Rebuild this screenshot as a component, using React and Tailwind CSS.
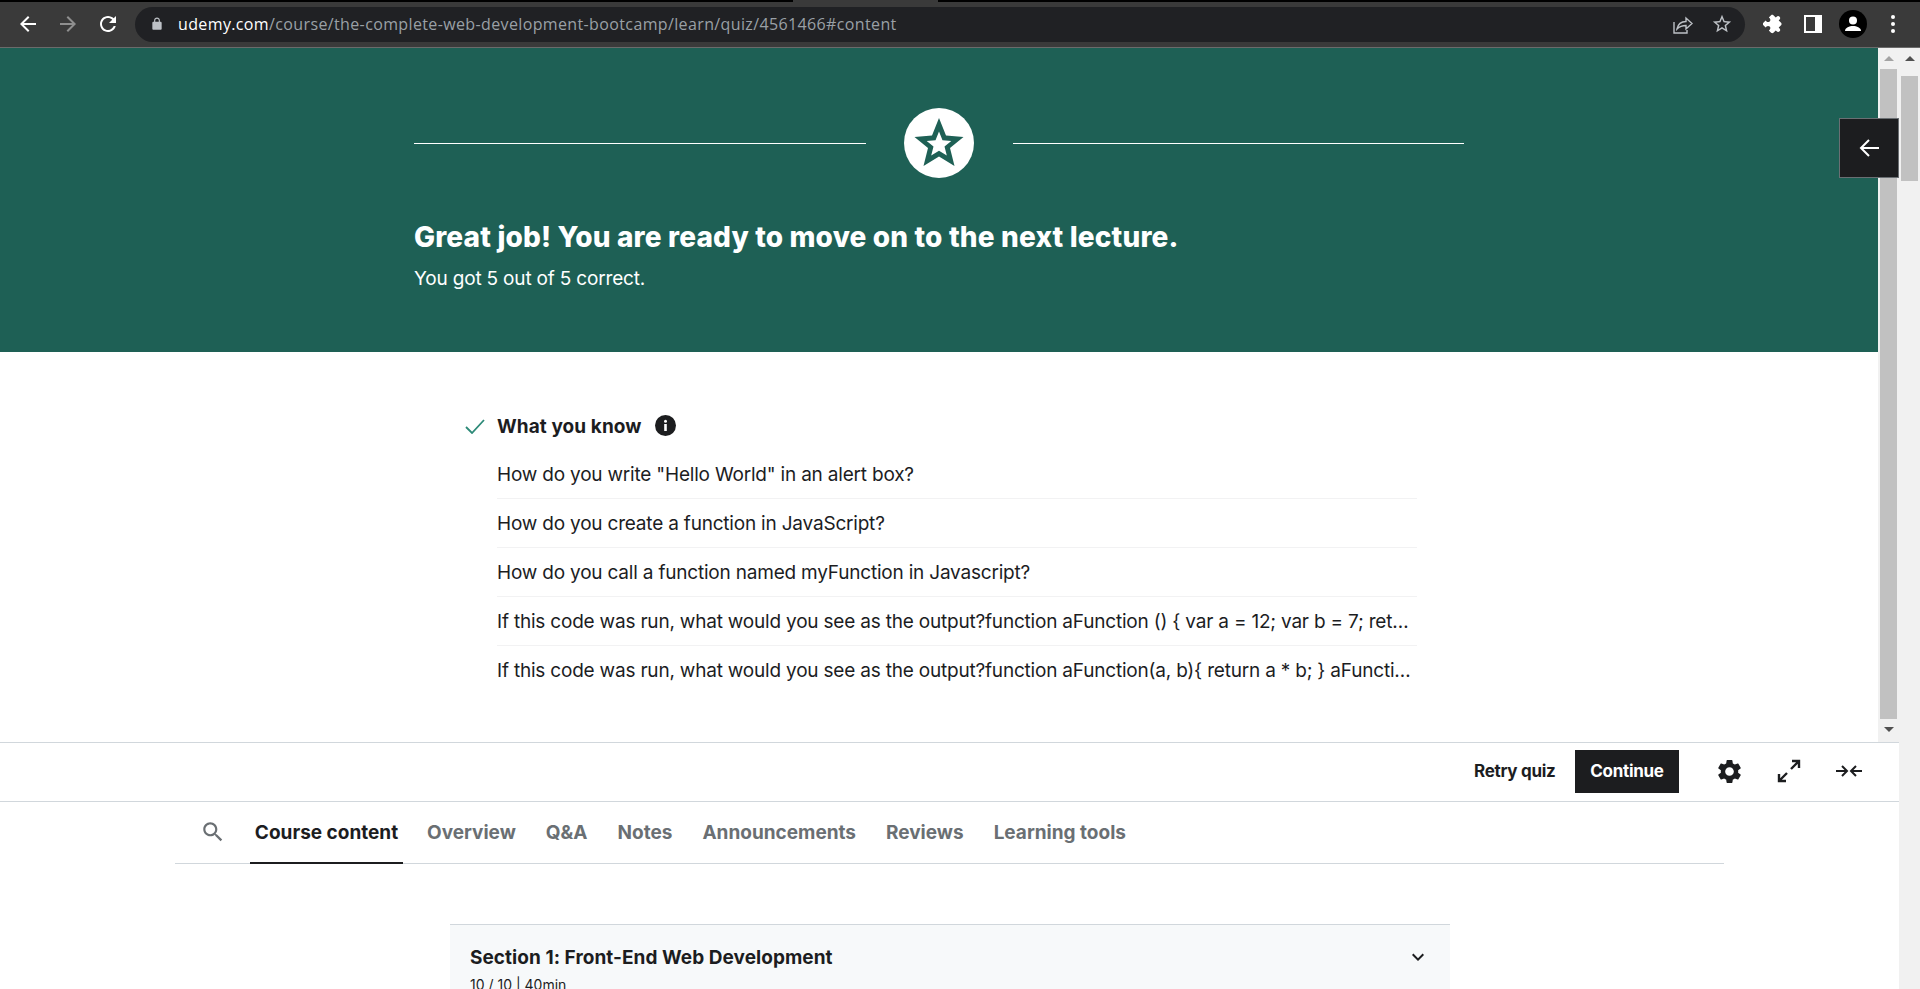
const F = "font-['Inter',sans-serif]";

function Mat({ d, className, fill = "currentColor" }) {
  return (
    <svg viewBox="0 0 24 24" className={className} fill={fill}>
      <path d={d} />
    </svg>
  );
}

const back = "M20 11H7.83l5.59-5.59L12 4l-8 8 8 8 1.41-1.41L7.83 13H20v-2z";
const forward = "M4 11h12.17l-5.59-5.59L12 4l8 8-8 8-1.41-1.41L16.17 13H4v-2z";
const refresh = "M17.65 6.35C16.2 4.9 14.21 4 12 4c-4.42 0-7.99 3.58-7.99 8s3.57 8 7.99 8c3.73 0 6.84-2.55 7.73-6h-2.08c-.82 2.33-3.04 4-5.65 4-3.31 0-6-2.69-6-6s2.69-6 6-6c1.66 0 3.14.69 4.22 1.78L13 11h7V4l-2.35 2.35z";
const lock = "M18 8h-1V6c0-2.76-2.24-5-5-5S7 3.24 7 6v2H6c-1.1 0-2 .9-2 2v10c0 1.1.9 2 2 2h12c1.1 0 2-.9 2-2V10c0-1.1-.9-2-2-2zM9 6c0-1.66 1.34-3 3-3s3 1.34 3 3v2H9V6z";
const starOutline = "M22 9.24l-7.19-.62L12 2 9.19 8.63 2 9.24l5.46 4.73L5.82 21 12 17.27 18.18 21l-1.63-7.03L22 9.24zM12 15.4l-3.76 2.27 1-4.28-3.32-2.88 4.38-.38L12 6.1l1.71 4.04 4.38.38-3.32 2.88 1 4.28L12 15.4z";
const puzzle = "M20.5 11H19V7c0-1.1-.9-2-2-2h-4V3.5C13 2.12 11.88 1 10.5 1S8 2.12 8 3.5V5H4c-1.1 0-1.99.9-1.99 2v3.8H3.5c1.49 0 2.7 1.21 2.7 2.7s-1.21 2.7-2.7 2.7H2V20c0 1.1.9 2 2 2h3.8v-1.5c0-1.49 1.21-2.7 2.7-2.7 1.49 0 2.7 1.21 2.7 2.7V22H17c1.1 0 2-.9 2-2v-4h1.5c1.38 0 2.5-1.12 2.5-2.5S21.88 11 20.5 11z";
const gear = "M19.14 12.94c.04-.3.06-.61.06-.94 0-.32-.02-.64-.07-.94l2.03-1.58c.18-.14.23-.41.12-.61l-1.92-3.32c-.12-.22-.37-.29-.59-.22l-2.39.96c-.5-.38-1.03-.7-1.62-.94l-.36-2.54c-.04-.24-.24-.41-.48-.41h-3.84c-.24 0-.43.17-.47.41l-.36 2.54c-.59.24-1.13.57-1.62.94l-2.39-.96c-.22-.08-.47 0-.59.22L2.74 8.87c-.12.21-.08.47.12.61l2.03 1.58c-.05.3-.09.63-.09.94s.02.64.07.94l-2.03 1.58c-.18.14-.23.41-.12.61l1.92 3.32c.12.22.37.29.59.22l2.39-.96c.5.38 1.03.7 1.62.94l.36 2.54c.05.24.24.41.48.41h3.84c.24 0 .44-.17.47-.41l.36-2.54c.59-.24 1.13-.56 1.62-.94l2.39.96c.22.08.47 0 .59-.22l1.92-3.32c.12-.22.07-.47-.12-.61l-2.01-1.58zM12 15.6c-1.98 0-3.6-1.62-3.6-3.6s1.62-3.6 3.6-3.6 3.6 1.62 3.6 3.6-1.62 3.6-3.6 3.6z";
const search = "M15.5 14h-.79l-.28-.27C15.41 12.59 16 11.11 16 9.5 16 5.91 13.09 3 9.5 3S3 5.91 3 9.5 5.91 16 9.5 16c1.61 0 3.09-.59 4.23-1.57l.27.28v.79l5 4.99L20.49 19l-4.99-5zm-6 0C7.01 14 5 11.99 5 9.5S7.01 5 9.5 5 14 7.01 14 9.5 11.99 14 9.5 14z";
const chevron = "M16.59 8.59L12 13.17 7.41 8.59 6 10l6 6 6-6z";

function Toolbar() {
  return (
    <div className="flex h-[48px] shrink-0 flex-col bg-[#3a3a3a]">
      <div className="h-[2px] bg-black pl-[793px]"><div className="h-full w-[145px] bg-[#3a3a3a]" /></div>
      <div className="flex flex-1 items-center pl-[8px] pb-[1px]">
        <div className="flex h-[40px] w-[40px] items-center justify-center text-white"><Mat d={back} className="h-[24px] w-[24px]" /></div>
        <div className="flex h-[40px] w-[40px] items-center justify-center text-[#8f8f8f]"><Mat d={forward} className="h-[24px] w-[24px]" /></div>
        <div className="flex h-[40px] w-[40px] items-center justify-center text-white"><Mat d={refresh} className="h-[24px] w-[24px]" /></div>
        <div className="ml-[7px] flex h-[35px] w-[1610px] items-center rounded-full bg-[#202124] pl-[15px] pr-[12px]">
          <Mat d={lock} className="h-[14px] w-[14px] text-[#bdc1c6]" />
          <div className="ml-[14px] flex-1 truncate font-['Open_Sans',sans-serif] text-[16px] tracking-[0.37px] text-[#9aa0a6]">
            <span className="text-white">udemy.com</span>/course/the-complete-web-development-bootcamp/learn/quiz/4561466#content
          </div>
          <svg viewBox="0 0 20 20" className="h-[20px] w-[20px] text-[#bdc1c6]" fill="none" stroke="currentColor" strokeWidth="1.4">
            <path d="M1 8v11h13v-3" />
            <path d="M4 15c1-5 4-7.5 9-7.5V4l6 5.500-6 5.500v-3.500c-3.500 0-6.500 1-9 3.500z" />
          </svg>
          <Mat d={starOutline} className="ml-[18px] h-[22px] w-[22px] text-[#bdc1c6]" />
        </div>
        <div className="ml-[9px] flex h-[40px] w-[40px] items-center justify-center text-white"><Mat d={puzzle} className="h-[20px] w-[20px] rotate-45" /></div>
        <div className="ml-[-1px] flex h-[40px] w-[40px] items-center justify-center text-white">
          <svg viewBox="0 0 18 18" className="h-[18px] w-[18px]" fill="currentColor"><path fillRule="evenodd" d="M0 0h18v18H0zM2 2v14h9V2z" /></svg>
        </div>
        <div className="flex h-[40px] w-[40px] items-center justify-center">
          <svg viewBox="0 0 28 28" className="h-[28px] w-[28px]">
            <circle cx="14" cy="14" r="14" fill="#000" />
            <circle cx="14" cy="10.500" r="4" fill="#fff" />
            <path d="M6 21c0-3.500 4.500-5 8-5s8 1.500 8 5z" fill="#fff" />
          </svg>
        </div>
        <div className="flex h-[40px] w-[40px] flex-col items-center justify-center gap-[3px]">
          <span className="h-[4px] w-[4px] rounded-full bg-white" />
          <span className="h-[4px] w-[4px] rounded-full bg-white" />
          <span className="h-[4px] w-[4px] rounded-full bg-white" />
        </div>
      </div>
      <div className="h-[1px] bg-[#6b6b6b]" />
    </div>
  );
}

function ScrollButton({ up, color }) {
  return (
    <div className="flex h-[21px] items-center justify-center">
      <svg viewBox="0 0 10 5" className="h-[5px] w-[10px]" fill={color}>
        <path d={up ? "M0 5 5 0l5 5z" : "M0 0l5 5 5-5z"} />
      </svg>
    </div>
  );
}

const questions = [
  'How do you write "Hello World" in an alert box?',
  "How do you create a function in JavaScript?",
  "How do you call a function named myFunction in Javascript?",
  "If this code was run, what would you see as the output?function aFunction () { var a = 12; var b = 7; ret…",
  "If this code was run, what would you see as the output?function aFunction(a, b){ return a * b; } aFuncti…",
];

function Star() {
  return (
    <svg viewBox="0 0 70 70" className="h-[70px] w-[70px]">
      <circle cx="35" cy="35" r="35" fill="#fff" />
      <path d="M35 10 42 27.500 59.500 29 46 40 50.500 58 35 48.500 19.500 58 24 40 10.500 29 28 27.500z" fill="#1e6055" />
      <path d="M35 23.500 38.500 32.300 47.300 33 40.500 38.500 42.800 47.500 35 42.700 27.200 47.500 29.500 38.500 22.700 33 31.500 32.300z" fill="#fff" />
    </svg>
  );
}

function Content() {
  return (
    <div className="relative flex h-[694px] shrink-0">
      <div className="flex-1 bg-white">
        <div className="h-[304px] bg-[#1e6055] pl-[414px] pt-[60px] text-white">
          <div className="flex w-[1050px] items-center">
            <div className="h-[1px] w-[452px] bg-white" />
            <div className="ml-[38px] mr-[39px]"><Star /></div>
            <div className="h-[1px] w-[451px] bg-white" />
          </div>
          <h1 className="mt-[39px] text-[28px] leading-[40px] font-extrabold tracking-[0.16px]">Great job! You are ready to move on to the next lecture.</h1>
          <p className="mt-[8px] text-[19px] leading-[28px] tracking-[-0.18px]">You got 5 out of 5 correct.</p>
        </div>
        <div className="pl-[465px] pt-[60px] text-[#1c1d1f]">
          <div className="flex h-[28px] items-center">
            <svg viewBox="0 0 20 15" className="h-[15px] w-[20px]" fill="none" stroke="#2d8a78" strokeWidth="1.800">
              <path d="M1 8l6 6L19 1" />
            </svg>
            <span className="ml-[12px] pt-[2px] text-[19px] font-bold tracking-[0.08px]">What you know</span>
            <svg viewBox="0 0 21 21" className="mb-[2px] ml-[13px] h-[21px] w-[21px]">
              <circle cx="10.500" cy="10.500" r="10.500" fill="#1c1d1f" />
              <circle cx="10.500" cy="6.300" r="1.500" fill="#fff" />
              <rect x="9.200" y="9" width="2.600" height="7" fill="#fff" />
            </svg>
          </div>
          <ul className="ml-[32px] mt-[10px] w-[920px]">
            {questions.map((q, i) => (
              <li key={i} className={`flex h-[49px] items-center ${i < 4 ? "border-b border-[#f2f2f3]" : ""}`}>
                <span className="block whitespace-nowrap pt-[2px] text-[19px] tracking-[-0.2px]">{q}</span>
              </li>
            ))}
          </ul>
        </div>
      </div>
      <div className="flex w-[21px] flex-col bg-[#f1f1f1] px-[2px]">
        <ScrollButton up color="#a3a3a3" />
        <div className="h-[650px] bg-[#c1c1c1]" />
        <ScrollButton color="#505050" />
      </div>
      <div className="absolute right-0 top-[70px] flex h-[60px] w-[60px] items-center justify-center border border-[#6a6f73] bg-[#1c1d1f] text-white">
        <svg viewBox="0 0 20 20" className="h-[20px] w-[20px]" fill="none" stroke="currentColor" strokeWidth="2">
          <path d="M20 10H2M10 2l-8 8 8 8" />
        </svg>
      </div>
    </div>
  );
}

function ActionBar() {
  return (
    <div className="flex h-[60px] shrink-0 items-center border-y border-[#d1d7dc] bg-white pb-[2px] text-[#1c1d1f]">
      <div className="ml-[1474px] w-[81px] whitespace-nowrap pt-[2px] text-[17px] font-bold tracking-[-0.3px]">Retry quiz</div>
      <div className="ml-[20px] flex h-[43px] w-[104px] items-center justify-center bg-[#1c1d1f] pt-[2px] text-[17px] font-bold tracking-[-0.3px] text-white">Continue</div>
      <div className="ml-[20px] flex w-[60px] justify-center"><Mat d={gear} className="h-[29px] w-[29px]" /></div>
      <div className="flex w-[60px] justify-center">
        <svg viewBox="0 0 24 24" className="h-[24px] w-[24px]" fill="none" stroke="currentColor" strokeWidth="2.400">
          <path d="M14 10l8-8M15 2h7v7M10 14l-8 8M2 15v7h7" />
        </svg>
      </div>
      <div className="flex w-[60px] justify-center">
        <svg viewBox="0 0 28 12" className="h-[12px] w-[28px]" fill="none" stroke="currentColor" strokeWidth="2">
          <path d="M1 6h10M7 1l5 5-5 5M27 6H17M21 1l-5 5 5 5" />
        </svg>
      </div>
    </div>
  );
}

const tabs = ["Overview", "Q&A", "Notes", "Announcements", "Reviews", "Learning tools"];

function Tabs() {
  return (
    <div className="ml-[175px] flex h-[62px] w-[1549px] shrink-0 items-center border-b border-[#d1d7dc] text-[19px] font-bold">
      <Mat d={search} className="ml-[25px] mb-[2px] h-[26px] w-[26px] text-[#6a6f73]" />
      <div className="relative ml-[24px] flex h-[61px] w-[153px] items-center justify-center pt-[2px] text-[#1c1d1f]">
        <span>Course content</span>
        <div className="absolute inset-x-0 -bottom-[1px] h-[2px] bg-[#1c1d1f]" />
      </div>
      <div className="ml-[24px] flex gap-[30px] pt-[2px] text-[#6a6f73]">
        {tabs.map((t) => (
          <span key={t}>{t}</span>
        ))}
      </div>
    </div>
  );
}

function Section() {
  return (
    <div className="ml-[450px] mt-[60px] flex h-[100px] w-[1000px] shrink-0 items-start justify-between border-t border-[#d1d7dc] bg-[#f7f9fa] px-[20px] pt-[20px] text-[#1c1d1f]">
      <div>
        <div className="text-[19px] leading-[26px] font-bold tracking-[0.05px]">Section 1: Front-End Web Development</div>
        <div className="mt-[4px] text-[14px] leading-[20px]">10 / 10 | 40min</div>
      </div>
      <Mat d={chevron} className="h-[24px] w-[24px]" />
    </div>
  );
}

export default function App() {
  return (
    <div className={`flex h-[989px] w-full flex-col overflow-hidden bg-white ${F}`}>
      <Toolbar />
      <div className="flex min-h-0 flex-1">
        <div className="flex min-w-0 flex-1 flex-col">
          <Content />
          <ActionBar />
          <Tabs />
          <Section />
        </div>
        <div className="flex w-[21px] shrink-0 flex-col bg-[#f1f1f1] px-[2px]">
          <ScrollButton up color="#505050" />
          <div className="mt-[7px] h-[105px] bg-[#c1c1c1]" />
        </div>
      </div>
    </div>
  );
}
